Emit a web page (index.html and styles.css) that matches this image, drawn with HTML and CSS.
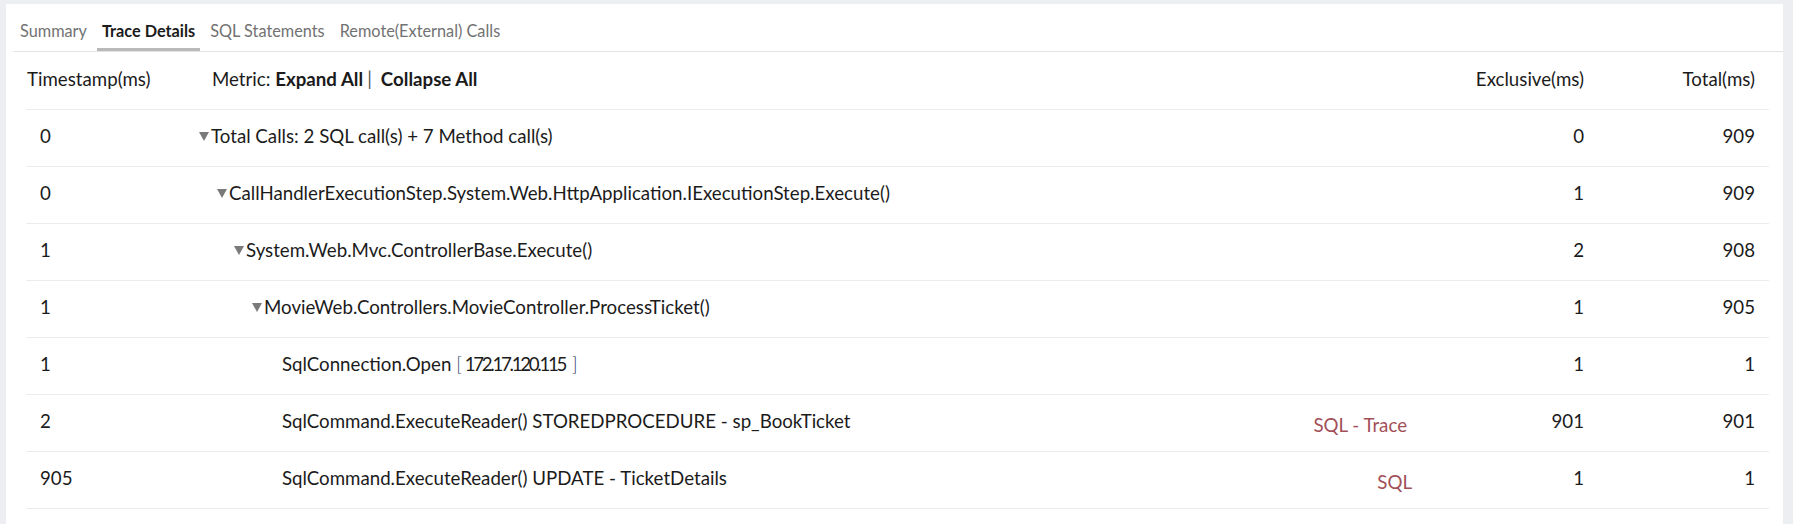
FILE: index.html
```html
<!DOCTYPE html>
<html lang="en">
<head>
<meta charset="utf-8">
<title>Trace Details</title>
<link rel="stylesheet" href="styles.css">
</head>
<body>
<div class="panel">
  <nav class="tabs">
    <span class="tab">Summary</span>
    <span class="tab active">Trace Details</span>
    <span class="tab">SQL Statements</span>
    <span class="tab">Remote(External) Calls</span>
  </nav>
  <div class="table">
    <div class="row head">
      <div class="c-ts">Timestamp(ms)</div>
      <div class="c-metric head-metric">Metric: <b class="link">Expand All</b><span class="pipe">|</span><b class="link">Collapse All</b></div>
      <div class="c-label"></div>
      <div class="c-num">Exclusive(ms)</div>
      <div class="c-num">Total(ms)</div>
    </div>
    <div class="row">
      <div class="c-ts val">0</div>
      <div class="c-metric l0"><span class="tri"></span>Total Calls: 2 SQL call(s) + 7 Method call(s)</div>
      <div class="c-label"></div>
      <div class="c-num">0</div>
      <div class="c-num">909</div>
    </div>
    <div class="row">
      <div class="c-ts val">0</div>
      <div class="c-metric l1"><span class="tri"></span>CallHandlerExecutionStep.System.Web.HttpApplication.IExecutionStep.Execute()</div>
      <div class="c-label"></div>
      <div class="c-num">1</div>
      <div class="c-num">909</div>
    </div>
    <div class="row">
      <div class="c-ts val">1</div>
      <div class="c-metric l2"><span class="tri"></span>System.Web.Mvc.ControllerBase.Execute()</div>
      <div class="c-label"></div>
      <div class="c-num">2</div>
      <div class="c-num">908</div>
    </div>
    <div class="row">
      <div class="c-ts val">1</div>
      <div class="c-metric l3"><span class="tri"></span>MovieWeb.Controllers.MovieController.ProcessTicket()</div>
      <div class="c-label"></div>
      <div class="c-num">1</div>
      <div class="c-num">905</div>
    </div>
    <div class="row">
      <div class="c-ts val">1</div>
      <div class="c-metric l4"><span class="tri none"></span>SqlConnection.Open <span class="br">[</span><span class="ip">172.17.120.115</span><span class="br br-close">]</span></div>
      <div class="c-label"></div>
      <div class="c-num">1</div>
      <div class="c-num">1</div>
    </div>
    <div class="row">
      <div class="c-ts val">2</div>
      <div class="c-metric l4"><span class="tri none"></span>SqlCommand.ExecuteReader() STOREDPROCEDURE - sp_BookTicket</div>
      <div class="c-label"><span class="sql trace">SQL - Trace</span></div>
      <div class="c-num">901</div>
      <div class="c-num">901</div>
    </div>
    <div class="row">
      <div class="c-ts val">905</div>
      <div class="c-metric l4"><span class="tri none"></span>SqlCommand.ExecuteReader() UPDATE - TicketDetails</div>
      <div class="c-label"><span class="sql">SQL</span></div>
      <div class="c-num">1</div>
      <div class="c-num">1</div>
    </div>
  </div>
</div>
</body>
</html>
```
FILE: styles.css
```css
html, body {
  margin: 0;
  padding: 0;
}
body {
  background: #edeef1;
  font-family: Lato, "Liberation Sans", Arial, sans-serif;
  color: #1b1b1b;
}
.panel {
  margin: 4px 10px 0 6px;
  background: #ffffff;
  min-height: calc(100vh - 4px);
}
.tabs {
  display: flex;
  gap: 5px;
  margin-left: 7px;
  padding-left: 2px;
  border-bottom: 1px solid #e2e2e2;
}
.tab {
  font-size: 16.3px;
  line-height: 20px;
  padding: 17px 5px 7px;
  color: #727272;
  border-bottom: 3px solid transparent;
}
.tab.active {
  color: #1b1b1b;
  font-weight: 700;
  border-bottom-color: #b9b9b9;
}
.table {
  margin: 0 14px 0 20px;
}
.row {
  display: grid;
  grid-template-columns: 173px 1fr 162px 172px 171px;
  align-items: center;
  height: 57px;
  box-sizing: border-box;
  border-bottom: 1px solid #ececec;
  padding-right: 14px;
  padding-bottom: 4px;
  font-size: 18.7px;
  white-space: nowrap;
}
.row.head {
  height: 58px;
}
.c-ts {
  padding-left: 1px;
}
.c-ts.val {
  padding-left: 14px;
}
.head-metric {
  padding-left: 13px;
}
.link {
  font-weight: 700;
}
.pipe {
  color: #555;
  margin: 0 9px 0 4px;
}
.l1 { padding-left: 18px; }
.l2 { padding-left: 35px; }
.l3 { padding-left: 53px; }
.l4 { padding-left: 71px; }
.tri {
  display: inline-block;
  width: 0;
  height: 0;
  border-left: 5.5px solid transparent;
  border-right: 5.5px solid transparent;
  border-top: 9px solid #7a7a7a;
  margin-right: 2px;
  vertical-align: 2px;
}
.tri.none {
  border-top-color: transparent;
}
.br {
  color: #2e3b63;
  font-weight: 300;
}
.ip {
  margin-left: 3px;
  letter-spacing: -2.3px;
}
.br-close {
  margin-left: 7px;
}
.c-label {
  text-align: right;
  padding-top: 8px;
}
.sql {
  color: #a24f58;
}
.sql.trace {
  margin-right: 5px;
}
.c-num {
  text-align: right;
}
```
